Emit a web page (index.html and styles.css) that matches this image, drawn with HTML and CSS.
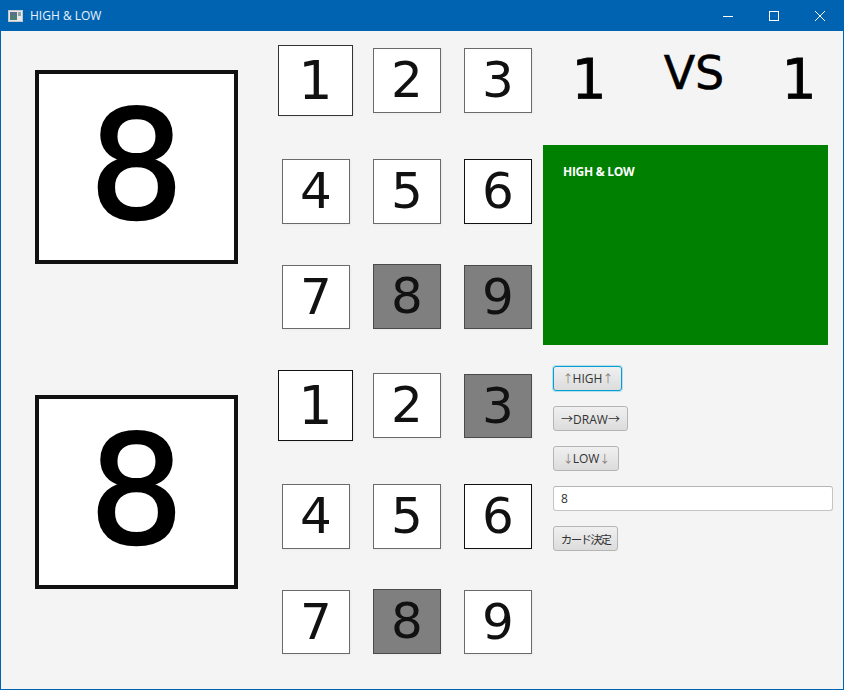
FILE: index.html
```html
<!DOCTYPE html>
<html lang="ja">
<head>
    <meta charset="UTF-8">
    <title>HIGH &amp; LOW</title>
    <link rel="stylesheet" href="styles.css">
</head>
<body>
    <div id="window">
        <div class="title-bar">
            <svg class="app-icon" width="16" height="14" viewBox="0 0 16 14">
                <rect x="0.5" y="1.5" width="14" height="11" fill="#e8e8e8" stroke="#c4c8cc"/>
                <rect x="2" y="3" width="7" height="8" fill="#4f7d78"/>
                <rect x="2" y="3" width="7" height="3" fill="#5c6f8a"/>
                <rect x="10" y="3" width="3" height="4" fill="#8fa7a0"/>
            </svg>
            <span class="title-text">HIGH &amp; LOW</span>
            <div class="window-controls">
                <svg class="control" width="46" height="30" viewBox="0 0 46 30"><path d="M18 15.5h10" stroke="#fff"/></svg>
                <svg class="control" width="46" height="30" viewBox="0 0 46 30"><rect x="18.5" y="10.5" width="9" height="9" fill="none" stroke="#fff"/></svg>
                <svg class="control" width="46" height="30" viewBox="0 0 46 30"><path d="M18 10l10 10M28 10l-10 10" stroke="#fff"/></svg>
            </div>
        </div>
        <div class="content">
            <div class="players">
                <div class="player">
                    <div class="chosen-col"><div class="chosen-card">8</div></div>
                    <div class="board">
                        <div class="card card-big">1</div>
                        <div class="card">2</div>
                        <div class="card">3</div>
                        <div class="card card-inset">4</div>
                        <div class="card">5</div>
                        <div class="card card-dark">6</div>
                        <div class="card card-inset card-short">7</div>
                        <div class="card used">8</div>
                        <div class="card used card-short">9</div>
                    </div>
                </div>
                <div class="player">
                    <div class="chosen-col"><div class="chosen-card">8</div></div>
                    <div class="board">
                        <div class="card card-big card-dark">1</div>
                        <div class="card">2</div>
                        <div class="card used card-short">3</div>
                        <div class="card card-inset">4</div>
                        <div class="card">5</div>
                        <div class="card card-dark">6</div>
                        <div class="card card-inset card-short">7</div>
                        <div class="card used">8</div>
                        <div class="card card-short">9</div>
                    </div>
                </div>
            </div>
            <div class="side">
                <div class="score-row">
                    <div class="score">1</div>
                    <div class="score versus">VS</div>
                    <div class="score">1</div>
                </div>
                <div class="message">HIGH &amp; LOW</div>
                <div class="controls">
                    <button class="btn btn-high focused"><span class="arrow">↑</span>HIGH<span class="arrow">↑</span></button>
                    <button class="btn btn-draw">→DRAW→</button>
                    <button class="btn btn-low"><span class="arrow">↓</span>LOW<span class="arrow">↓</span></button>
                    <input class="card-input" type="text" value="8">
                    <button class="btn btn-decide">カード決定</button>
                </div>
            </div>
        </div>
    </div>
</body>
</html>
```

FILE: styles.css
```css
html, body {
    margin: 0;
    padding: 0;
}
body {
    background-color: #f4f4f4;
    font-family: "Open Sans", "Noto Sans CJK JP", sans-serif;
    overflow: hidden;
}
#window {
    width: 844px;
    height: 690px;
    box-sizing: border-box;
    border: 1px solid #0063b1;
    border-top: none;
    display: flex;
    flex-direction: column;
}

/* Title bar */
.title-bar {
    height: 31px;
    flex: none;
    margin: 0 -1px;
    background-color: #0063b1;
    color: #eaf2fa;
    display: flex;
    align-items: center;
    font-size: 12px;
}
.app-icon {
    margin-left: 8px;
    margin-right: 6px;
}
.window-controls {
    margin-left: auto;
    margin-right: 1px;
    display: flex;
}
.control {
    display: block;
}

.content {
    flex: 1;
    display: flex;
    min-height: 0;
}

/* Player boards */
.players {
    width: 542px;
    flex: none;
}
.player {
    height: 325px;
    display: flex;
}
.chosen-col {
    width: 277px;
    padding-left: 34px;
    padding-top: 39px;
    box-sizing: border-box;
    flex: none;
}
.chosen-card {
    width: 203px;
    height: 194px;
    box-sizing: border-box;
    border: 4px solid #111;
    background-color: #fff;
    color: #000;
    font-family: "DejaVu Sans", sans-serif;
    font-size: 150px;
    line-height: 184px;
    text-align: center;
    -webkit-text-stroke: 2.5px #000;
}
.board {
    flex: 1;
    display: grid;
    grid-template-columns: 95px 91px 79px;
    grid-template-rows: 99px 123px 87px;
    align-items: center;
    justify-items: start;
}
.card {
    width: 68px;
    height: 65px;
    box-sizing: border-box;
    border: 1px solid #6a6a6a;
    background-color: #fff;
    color: #111;
    font-family: "DejaVu Sans", sans-serif;
    font-size: 50px;
    line-height: 63px;
    text-align: center;
    box-shadow: 1px 1px 2px rgba(0, 0, 0, 0.04);
}
.card-big {
    width: 75px;
    height: 71px;
    line-height: 69px;
    border-color: #333;
    font-size: 54px;
}
.card-inset {
    margin-left: 4px;
}
.card-short {
    height: 64px;
    margin-top: 1px;
    line-height: 62px;
}
.card-dark {
    border-color: #111;
}
.used {
    background-color: #7f7f7f;
    border-color: #4a4a4a;
}

/* Right hand side */
.side {
    flex: 1;
}
.score-row {
    height: 114px;
    display: grid;
    grid-template-columns: 92px 118px 92px;
    box-sizing: border-box;
    padding-top: 14px;
}
.score {
    font-family: "DejaVu Sans", sans-serif;
    font-size: 55px;
    line-height: 68px;
    color: #000;
    text-align: center;
    -webkit-text-stroke: 0.8px #000;
}
.versus {
    font-size: 46px;
    margin-top: -6px;
    -webkit-text-stroke: 0.5px #000;
}
.message {
    width: 285px;
    height: 200px;
    box-sizing: border-box;
    padding: 18px 20px;
    background-color: #008000;
    color: #fff;
    font-size: 12px;
    font-weight: 700;
    letter-spacing: -0.3px;
}
.controls {
    padding: 21px 0 0 10px;
    display: flex;
    flex-direction: column;
    align-items: flex-start;
    gap: 15px;
}
.btn {
    height: 25px;
    padding: 0;
    box-sizing: border-box;
    border: 1px solid #b5b5b5;
    border-radius: 3px;
    background: linear-gradient(#f0f0f0, #dcdcdc);
    color: #333;
    font-family: "Open Sans", "Noto Sans CJK JP", sans-serif;
    font-size: 12px;
    white-space: nowrap;
}
.btn-high {
    width: 69px;
}
.btn-draw {
    width: 75px;
}
.btn-low {
    width: 66px;
}
.btn-decide {
    width: 65px;
    font-size: 11.5px;
    letter-spacing: -1.6px;
}
.btn.focused {
    border-color: #039ed3;
    box-shadow: 0 0 0 1px rgba(3, 158, 211, 0.25);
}
.arrow {
    display: inline-block;
    width: 10px;
    text-align: center;
    color: #8a8078;
    font-size: 11px;
}
.card-input {
    width: 280px;
    height: 25px;
    padding: 0 7px;
    box-sizing: border-box;
    border: 1px solid #c4c4c4;
    border-top-color: #b5b5b5;
    border-radius: 3px;
    background-color: #fff;
    color: #333;
    font-family: "Open Sans", sans-serif;
    font-size: 12px;
}
```
